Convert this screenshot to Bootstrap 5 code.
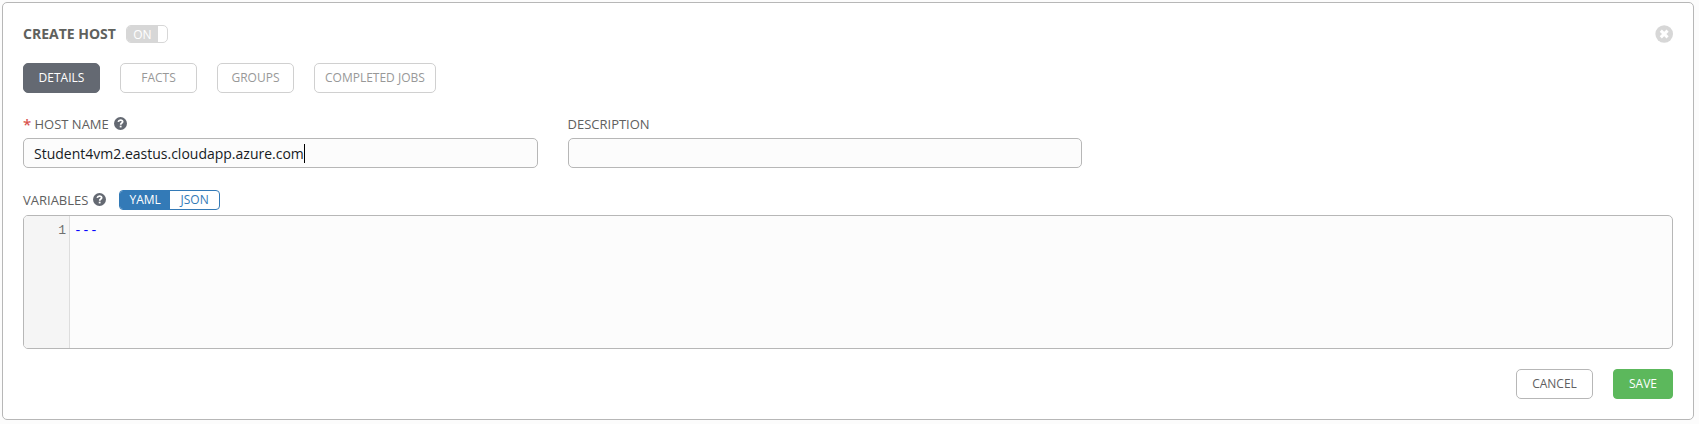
<!DOCTYPE html>
<html lang="en">
<head>
<meta charset="utf-8">
<title>Create Host</title>
<link rel="stylesheet" href="https://cdn.jsdelivr.net/npm/bootstrap@5.3.0/dist/css/bootstrap.min.css">
<style>
body{background:#fcfcfc;font-family:"Open Sans","Noto Sans",sans-serif;font-size:14px;line-height:20px;color:#606060}
.host-panel{margin:2px 5px 4px 2px;height:418px;border:1px solid #b7b7b7;border-radius:5px;background:#fff;padding:22px 20px 20px}
.panel-title{font-size:14px;font-weight:700;line-height:18px;color:#5f615d;margin:0 10px 0 0;height:18px}
.on-switch{width:42px;height:18px;border:1px solid #d7d7d7;border-radius:5px;overflow:hidden;font-size:12px;line-height:18px}
.on-switch span{width:31px;background:#d7d7d7;color:#fff;text-align:center}
.btn.act{--bs-btn-font-size:12px;height:30px;min-width:77px;padding:0 10px 1px;line-height:27px;border-radius:5px;border-color:#b7b7b7;color:#606060;background:#fff}
.btn.tab-btn{border-color:#d0d0d0;color:#989898}
.btn.tab-btn.on{background:#646972;border-color:#646972;color:#fff}
.btn.act.save{min-width:60px;background:#5cb85c;border-color:#5cb85c;color:#fff;border-radius:4px}
.field{width:33%;padding-right:30px}
.field-label{font-size:13px;line-height:20px;height:20px;color:#606060}
.req{color:#d9534f;font-size:15px;font-weight:600;width:11.5px;line-height:20px}
.help{margin:-1px 0 0 5px}
.form-control.host-input{height:30px;padding:1px 10px 0;border:1px solid #b7b7b7;border-radius:5px;background:#fcfcfc;font-size:14px;line-height:27px;color:#161b1f}
.caret{width:1px;height:19px;background:#000}
.mode{height:20px;width:101px;margin-left:13px;border:1px solid #337ab7;border-radius:4px;overflow:hidden;font-size:12px;line-height:18px;color:#337ab7;background:#fff}
.mode span{width:50px;text-align:center}
.mode .on{background:#337ab7;color:#fff}
.editor{height:134px;border:1px solid #b7b7b7;border-radius:5px;background:#fcfcfc;overflow:hidden;font-family:"Liberation Mono",monospace;font-size:13px;line-height:20px}
.gutter{width:46px;background:#f5f5f5;border-right:1px solid #ddd;color:#707070;padding:5px 3px 0 0}
.code{padding:5px 0 0 4px;color:#00f;letter-spacing:.2px}
</style>
</head>
<body>
<svg class="d-none"><symbol id="help" viewBox="0 0 12 12"><circle cx="6" cy="6" r="6" fill="#646972"/><path d="M3.900 4.500C4.200 3.200 5 2.800 6 2.800c1.200 0 2 .7 2 1.600C8 5.600 6.200 5.600 6.200 7.100" fill="none" stroke="#fff" stroke-width="1.600"/><path d="M5.300 8h1.700v1.600H5.300z" fill="#fff"/></symbol></svg>
<main class="host-panel d-flex flex-column">
  <div class="d-flex align-items-center">
    <h1 class="panel-title">CREATE HOST</h1>
    <div class="on-switch d-flex"><span>ON</span></div>
    <svg class="ms-auto" width="18" height="18" viewBox="0 0 18 18"><circle cx="9.200" cy="9" r="8.800" fill="#d7d7d7"/><path d="M5.800 5.600l6.800 6.800M12.600 5.600l-6.800 6.800" stroke="#fff" stroke-width="3"/></svg>
  </div>
  <nav class="d-flex tabs-row" style="gap:20px;margin-top:20px">
    <button class="btn act tab-btn on">DETAILS</button>
    <button class="btn act tab-btn">FACTS</button>
    <button class="btn act tab-btn">GROUPS</button>
    <button class="btn act tab-btn">COMPLETED JOBS</button>
  </nav>
  <div class="d-flex" style="margin-top:21px">
    <div class="field">
      <div class="field-label d-flex align-items-center"><span class="req">*</span>HOST NAME
        <svg class="help" width="13" height="13"><use href="#help"/></svg>
      </div>
      <div class="form-control host-input d-flex align-items-center" style="margin-top:4px">Student4vm2.eastus.cloudapp.azure.com<span class="caret"></span></div>
    </div>
    <div class="field">
      <div class="field-label">DESCRIPTION</div>
      <input class="form-control host-input" style="margin-top:4px" aria-label="Description">
    </div>
  </div>
  <div class="d-flex align-items-center field-label" style="margin-top:22px">VARIABLES
    <svg class="help" width="13" height="13"><use href="#help"/></svg>
    <div class="mode d-flex"><span class="on">YAML</span><span>JSON</span></div>
  </div>
  <div class="editor d-flex" style="margin-top:5px"><div class="gutter text-end">1</div><div class="code">---</div></div>
  <div class="d-flex justify-content-end" style="gap:20px;margin-top:20px">
    <button class="btn act">CANCEL</button>
    <button class="btn act save">SAVE</button>
  </div>
</main>
<script src="https://cdn.jsdelivr.net/npm/bootstrap@5.3.0/dist/js/bootstrap.bundle.min.js"></script>
</body>
</html>
